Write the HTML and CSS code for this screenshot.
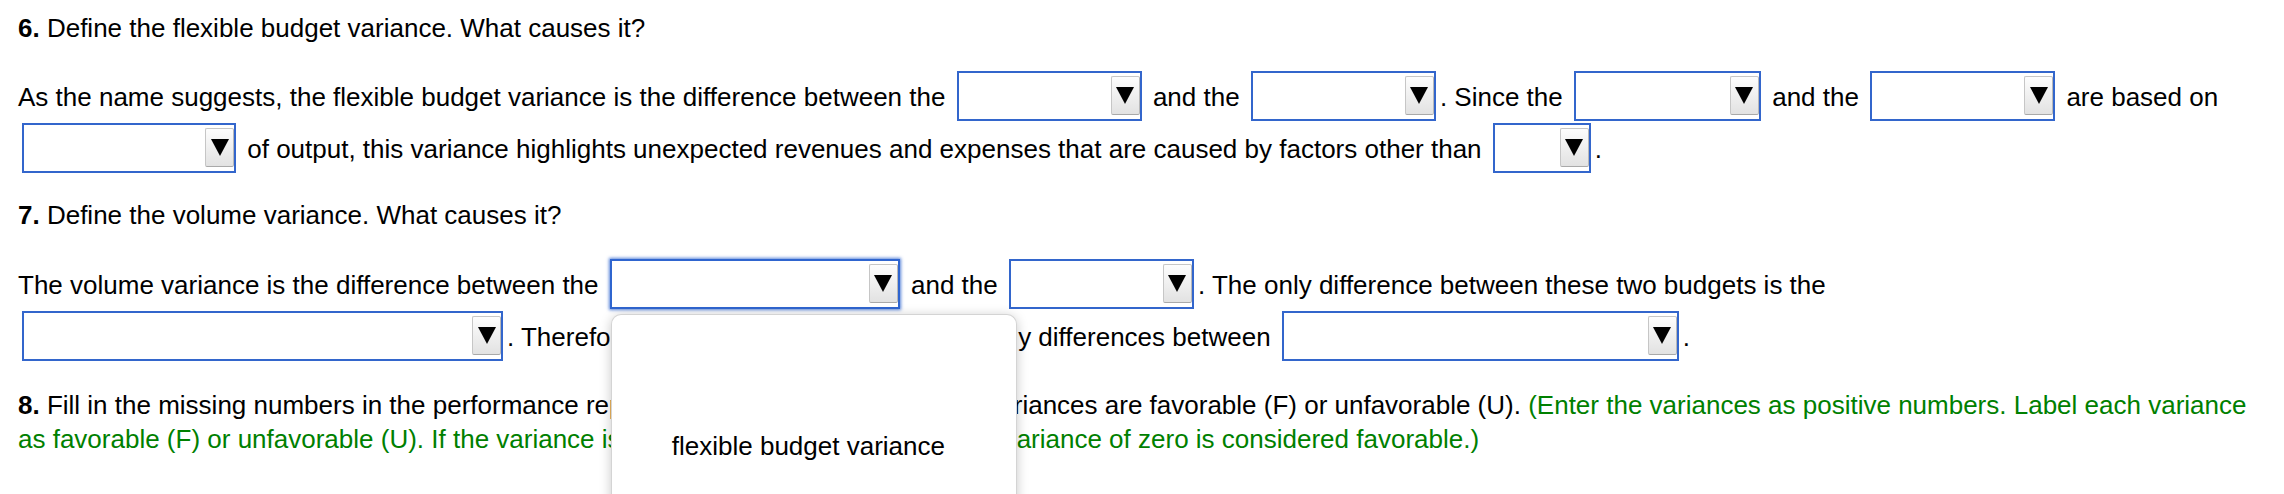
FILE: index.html
```html
<!DOCTYPE html>
<html>
<head>
<meta charset="utf-8">
<title>Flexible budget questions</title>
<link rel="stylesheet" href="styles.css">
</head>
<body>
<div class="page">
  <p class="q"><b>6.</b> Define the flexible budget variance. What causes it?</p>
  <p class="ans">As the name suggests, the flexible budget variance is the difference between the <span class="sel w185"><span class="btn"><svg viewBox="0 0 18 17" width="18" height="17"><polygon points="0,0 18,0 9,17"/></svg></span></span> and the <span class="sel w185"><span class="btn"><svg viewBox="0 0 18 17" width="18" height="17"><polygon points="0,0 18,0 9,17"/></svg></span></span>. Since the <span class="sel w187"><span class="btn"><svg viewBox="0 0 18 17" width="18" height="17"><polygon points="0,0 18,0 9,17"/></svg></span></span> and the <span class="sel w185"><span class="btn"><svg viewBox="0 0 18 17" width="18" height="17"><polygon points="0,0 18,0 9,17"/></svg></span></span> are based on <span class="sel w214"><span class="btn"><svg viewBox="0 0 18 17" width="18" height="17"><polygon points="0,0 18,0 9,17"/></svg></span></span> of output, this variance highlights unexpected revenues and expenses that are caused by factors other than <span class="sel w98"><span class="btn"><svg viewBox="0 0 18 17" width="18" height="17"><polygon points="0,0 18,0 9,17"/></svg></span></span>.</p>
  <p class="q q7"><b>7.</b> Define the volume variance. What causes it?</p>
  <p class="ans">The volume variance is the difference between the <span class="sel w290 focus"><span class="btn"><svg viewBox="0 0 18 17" width="18" height="17"><polygon points="0,0 18,0 9,17"/></svg></span><span class="menu"><span class="opt">flexible budget variance</span></span></span> and the <span class="sel w185"><span class="btn"><svg viewBox="0 0 18 17" width="18" height="17"><polygon points="0,0 18,0 9,17"/></svg></span></span>. The only difference between these two budgets is the <span class="sel w481"><span class="btn"><svg viewBox="0 0 18 17" width="18" height="17"><polygon points="0,0 18,0 9,17"/></svg></span></span>. Therefore, the volume variance isolates only differences between <span class="sel w397"><span class="btn"><svg viewBox="0 0 18 17" width="18" height="17"><polygon points="0,0 18,0 9,17"/></svg></span></span>.</p>
  <p class="note"><b>8.</b> Fill in the missing numbers in the performance report, and indicate whether these variances are favorable (F) or unfavorable (U). <span class="green">(Enter the variances as positive numbers. Label each variance as favorable (F) or unfavorable (U). If the variance is zero, do not choose any label. A variance of zero is considered favorable.)</span></p>
</div>
</body>
</html>
```
FILE: styles.css
```css
html {
  margin: 0;
  padding: 0;
  overflow: hidden;
  background: #ffffff;
}

body {
  margin: 0;
  padding: 0;
  min-height: 494px;
  font-family: "Liberation Sans", Arial, Helvetica, sans-serif;
  font-size: 26px;
  color: #000000;
}

.page {
  padding: 13px 18px 0 18px;
}

p {
  margin: 0;
}

.q {
  line-height: 30px;
  margin-bottom: 28px;
}

.q7 {
  margin-bottom: 29px;
}

.ans {
  line-height: 52px;
  margin-bottom: 25px;
}

.note {
  line-height: 34px;
}

.green {
  color: #008000;
}

.sel {
  display: inline-block;
  vertical-align: top;
  box-sizing: border-box;
  height: 50px;
  margin: 0 4px 2px 4px;
  padding-top: 3px;
  border: 2px solid #3366cc;
  background: #ffffff;
  text-align: right;
  line-height: 0;
}

.w98 { width: 98px; }
.w185 { width: 185px; }
.w187 { width: 187px; }
.w214 { width: 214px; }
.w290 { width: 290px; }
.w397 { width: 397px; }
.w481 { width: 481px; }

.btn {
  display: inline-flex;
  align-items: center;
  justify-content: center;
  box-sizing: border-box;
  width: 29px;
  height: 39px;
  border: 1px solid #c6c6c6;
  border-bottom-color: #a9a9a9;
  border-right-color: #b8b8b8;
  border-radius: 2px;
  background: linear-gradient(#fdfdfd, #e2e2e2);
}

.btn svg {
  display: block;
  fill: #000000;
}

.focus {
  position: relative;
  border-color: #2f65cf;
  box-shadow: 0 0 3px 1px rgba(47, 101, 207, 0.8);
}

.menu {
  position: absolute;
  left: -1px;
  top: calc(100% + 7px);
  box-sizing: border-box;
  width: 406px;
  height: 220px;
  padding: 116px 0 0 60px;
  background: #ffffff;
  border: 1px solid #d4d4d4;
  border-bottom: none;
  border-radius: 10px 10px 0 0;
  box-shadow: 0 2px 12px rgba(0, 0, 0, 0.22);
  text-align: left;
  line-height: 30px;
  white-space: nowrap;
  z-index: 2;
}

.opt {
  display: block;
  color: #000000;
}
```
